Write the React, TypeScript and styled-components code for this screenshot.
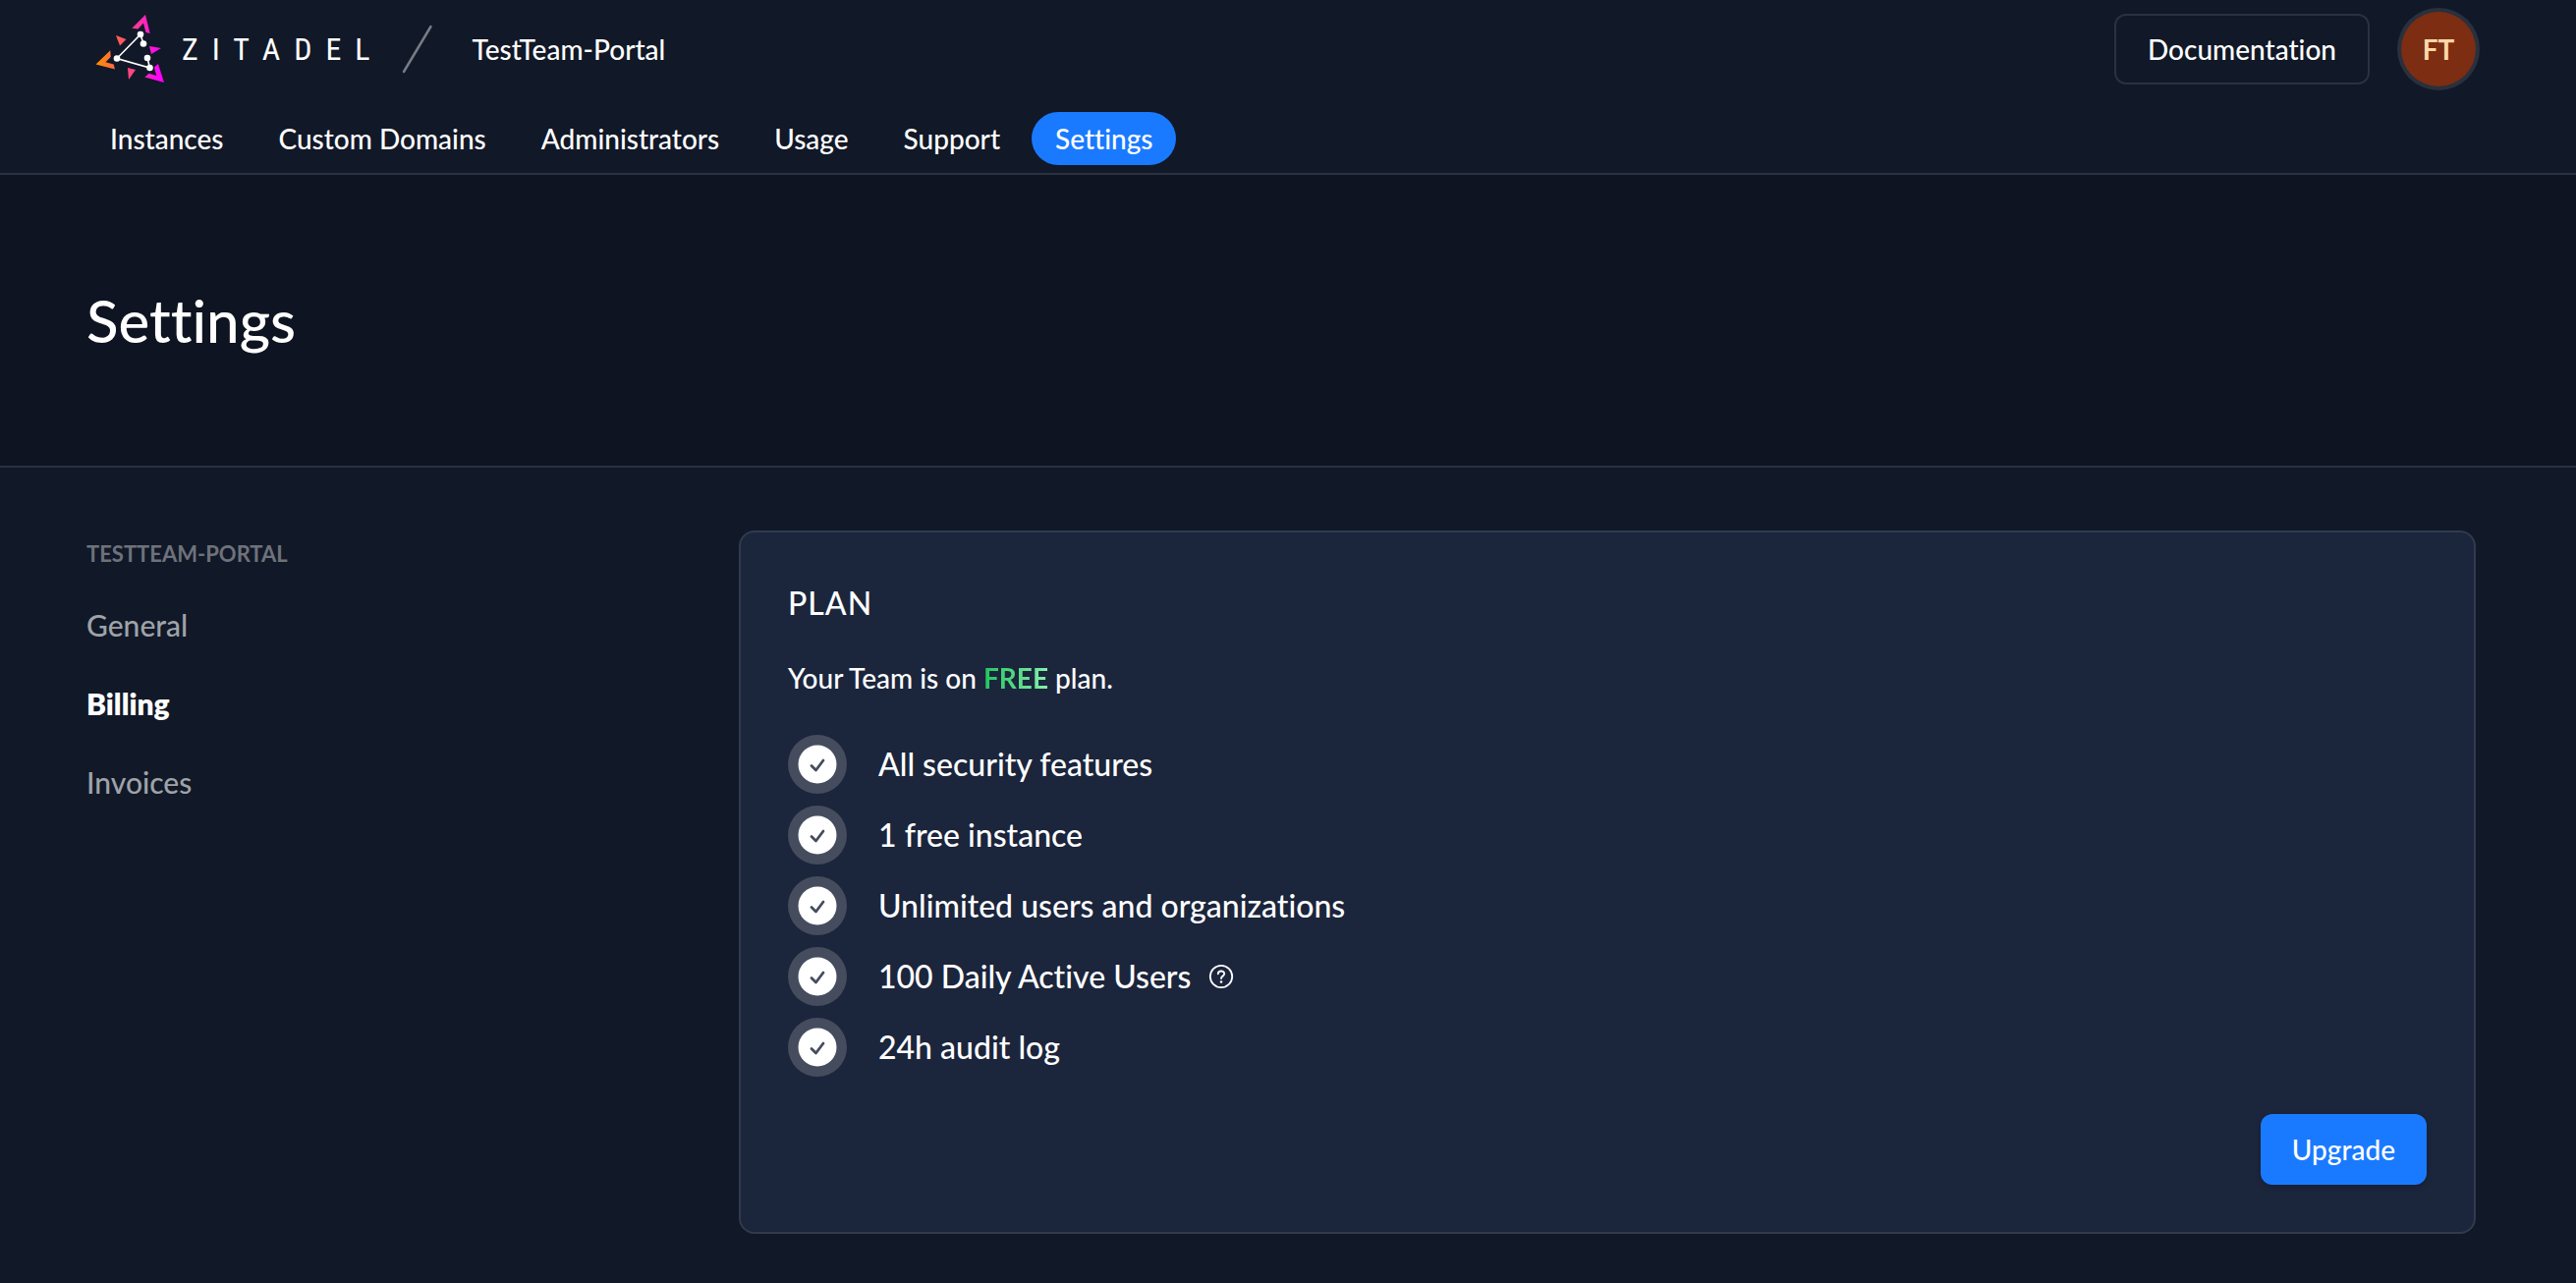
import React from 'react';
import styled, { createGlobalStyle } from 'styled-components';

const Global = createGlobalStyle`
  *, *::before, *::after { box-sizing: border-box; }
  body {
    margin: 0;
    background: #111827;
    color: #ffffff;
    font-family: Lato, 'Open Sans', sans-serif;
    font-size: 28px;
    font-weight: 500;
    line-height: 40px;
    font-variant-ligatures: none;
  }
  h1, h2, h3, p, ul { margin: 0; padding: 0; font-weight: 500; }
  ul { list-style: none; }
  a { color: inherit; text-decoration: none; }
  button { font: inherit; font-variant-ligatures: none; color: inherit; cursor: pointer; }
`;

const line = '#2b313f';
const gutter = '0 102px 0 88px';

const Header = styled.header`
  border-bottom: 2px solid ${line};
`;

const TopBar = styled.div`
  display: flex;
  align-items: center;
  justify-content: space-between;
  height: 100px;
  padding: ${gutter};
`;

const Cluster = styled.div`
  display: flex;
  align-items: center;
`;

const Brand = styled.a`
  display: flex;
  align-items: center;
  gap: 15px;
  padding-left: 8px;
`;

const Wordmark = styled.span`
  font-family: 'Roboto Condensed', 'Open Sans Condensed', 'DejaVu Sans Condensed', sans-serif;
  font-size: 32px;
  font-weight: 400;
  letter-spacing: 14px;
`;

const Slash = styled.svg`
  margin: 0 40px 0 18px;
`;

const DocsButton = styled.button`
  height: 72px;
  padding: 0 32px;
  margin-right: 32px;
  background: transparent;
  border: 2px solid ${line};
  border-radius: 12px;
`;

const Avatar = styled.button`
  width: 76px;
  height: 76px;
  padding: 0;
  border: 0;
  border-radius: 50%;
  background: #7c2d12;
  box-shadow: 0 0 0 4px #29303e;
  color: #fed7aa;
  font-weight: 700;
`;

const Tabs = styled.nav`
  display: flex;
  gap: 8px;
  padding: ${gutter};
  padding-top: 14px;
  padding-bottom: 8px;
`;

const Tab = styled.a<{ $active?: boolean }>`
  padding: 7px 24px;
  border-radius: 28px;
  background: ${(p) => (p.$active ? '#1a7aff' : 'transparent')};
`;

const Hero = styled.section`
  padding: ${gutter};
  padding-top: 112px;
  padding-bottom: 112px;
  background: #0e1421;
  border-bottom: 2px solid ${line};
`;

const Title = styled.h1`
  font-size: 60px;
  line-height: 72px;
`;

const Body = styled.main`
  display: grid;
  grid-template-columns: 664px 1fr;
  padding: ${gutter};
  padding-top: 64px;
  padding-bottom: 48px;
`;

const Side = styled.nav`
  display: flex;
  flex-direction: column;
`;

const SideTitle = styled.h2`
  font-size: 22px;
  line-height: 32px;
  font-weight: 700;
  color: #6e727b;
  padding: 8px 0 16px;
`;

const SideLink = styled.a<{ $active?: boolean }>`
  padding: 20px 0;
  font-size: 30px;
  color: ${(p) => (p.$active ? '#ffffff' : '#9fa3a9')};
  font-weight: ${(p) => (p.$active ? 800 : 500)};
`;

const Card = styled.section`
  padding: 48px;
  border: 2px solid #303b4e;
  border-radius: 16px;
  background: #1b253c;
`;

const CardTitle = styled.h3`
  font-size: 32px;
  line-height: 48px;
  letter-spacing: 1px;
`;

const PlanLine = styled.p`
  padding: 32px 0 38px;
`;

const PlanName = styled.strong`
  background: linear-gradient(90deg, #22c55e, #86efac);
  background-clip: text;
  -webkit-background-clip: text;
  color: transparent;
  font-weight: 700;
`;

const Features = styled.ul`
  display: flex;
  flex-direction: column;
  gap: 12px;
  font-size: 32px;
`;

const Feature = styled.li`
  display: flex;
  align-items: center;
  gap: 32px;
  height: 60px;
`;

const FeatureText = styled.span`
  display: flex;
  align-items: center;
  gap: 18px;
`;

const Help = styled.svg`
  display: block;
`;

const Actions = styled.div`
  display: flex;
  justify-content: flex-end;
  padding-top: 38px;
`;

const Primary = styled.button`
  height: 72px;
  padding: 0 32px;
  border: 0;
  border-radius: 12px;
  background: #1a7aff;
  box-shadow: 0 2px 6px rgba(0, 0, 0, 0.2);
`;

const Logo = () => (
  <svg width="74" height="72" viewBox="96 14 74 72" aria-hidden="true">
    <defs>
      <linearGradient id="brand" gradientUnits="userSpaceOnUse" x1="98" y1="60" x2="164" y2="60">
        <stop offset="0" stopColor="#ff8f00" />
        <stop offset="0.5" stopColor="#fe4a7a" />
        <stop offset="1" stopColor="#fe00ff" />
      </linearGradient>
    </defs>
    <g fill="url(#brand)">
      <path d="M148 15L152.700 34L148.500 33L146 23.500L140.500 29.500L134.300 28.700Z" />
      <path d="M97.500 65.500L112.300 51.300L112.700 58L107.500 63.300L115.700 65.500L117 70.500Z" />
      <path d="M167 84L147.300 78.500L151.700 74.700L159.300 77L157 68.500L161 65Z" />
      <path d="M118 36L128.500 40L122 46.500Z" />
      <path d="M152 47L164 49L154 55Z" />
      <path d="M130 69L138 71L131 81Z" />
    </g>
    <path d="M146 44.500L143 35L119 59.500L152.500 69L150 59" fill="none" stroke="#fff" strokeWidth="1.600" />
    <g fill="#fff">
      <circle cx="143" cy="35" r="3.300" />
      <circle cx="146" cy="44.500" r="3.300" />
      <circle cx="119" cy="59.500" r="3.300" />
      <circle cx="150" cy="59" r="3.300" />
      <circle cx="152.500" cy="69" r="3.300" />
    </g>
  </svg>
);

const Check = () => (
  <svg width="60" height="60" viewBox="0 0 60 60" aria-hidden="true">
    <circle cx="30" cy="30" r="30" fill="#454c5e" />
    <circle cx="30" cy="30" r="19.500" fill="#fff" />
    <path d="M24 31.500L28.500 36L36 26" fill="none" stroke="#454c5e" strokeWidth="2.800" strokeLinecap="round" strokeLinejoin="round" />
  </svg>
);

const HelpIcon = () => (
  <Help width="26" height="26" viewBox="0 0 26 26" role="img" aria-label="Help">
    <circle cx="13" cy="13" r="11.200" fill="none" stroke="#fff" strokeWidth="1.800" />
    <path d="M9.800 10.200C10 6.500 16.300 6.700 16.200 10.300C16.100 12.700 13 12.600 13 15" fill="none" stroke="#fff" strokeWidth="1.900" strokeLinecap="round" />
    <circle cx="13" cy="18.500" r="1.300" fill="#fff" />
  </Help>
);

const tabs = ['Instances', 'Custom Domains', 'Administrators', 'Usage', 'Support', 'Settings'];
const sections = ['General', 'Billing', 'Invoices'];
const features = [
  { text: 'All security features' },
  { text: '1 free instance' },
  { text: 'Unlimited users and organizations' },
  { text: '100 Daily Active Users', help: true },
  { text: '24h audit log' },
];

export default function App() {
  return (
    <>
      <Global />
      <Header>
        <TopBar>
          <Cluster>
            <Brand href="#">
              <Logo />
              <Wordmark>ZITADEL</Wordmark>
            </Brand>
            <Slash width="32" height="50" viewBox="0 0 32 50" aria-hidden="true">
              <path d="M2 48L29.500 2" stroke="#777b84" strokeWidth="2.500" strokeLinecap="round" />
            </Slash>
            <a href="#">TestTeam-Portal</a>
          </Cluster>
          <Cluster>
            <DocsButton type="button">Documentation</DocsButton>
            <Avatar type="button">FT</Avatar>
          </Cluster>
        </TopBar>
        <Tabs>
          {tabs.map((t) => (
            <Tab key={t} href="#" $active={t === 'Settings'}>{t}</Tab>
          ))}
        </Tabs>
      </Header>
      <Hero>
        <Title>Settings</Title>
      </Hero>
      <Body>
        <Side>
          <SideTitle>TESTTEAM-PORTAL</SideTitle>
          {sections.map((s) => (
            <SideLink key={s} href="#" $active={s === 'Billing'}>{s}</SideLink>
          ))}
        </Side>
        <Card>
          <CardTitle>PLAN</CardTitle>
          <PlanLine>
            Your Team is on <PlanName>FREE</PlanName> plan.
          </PlanLine>
          <Features>
            {features.map((f) => (
              <Feature key={f.text}>
                <Check />
                <FeatureText>
                  {f.text}
                  {f.help && <HelpIcon />}
                </FeatureText>
              </Feature>
            ))}
          </Features>
          <Actions>
            <Primary type="button">Upgrade</Primary>
          </Actions>
        </Card>
      </Body>
    </>
  );
}
